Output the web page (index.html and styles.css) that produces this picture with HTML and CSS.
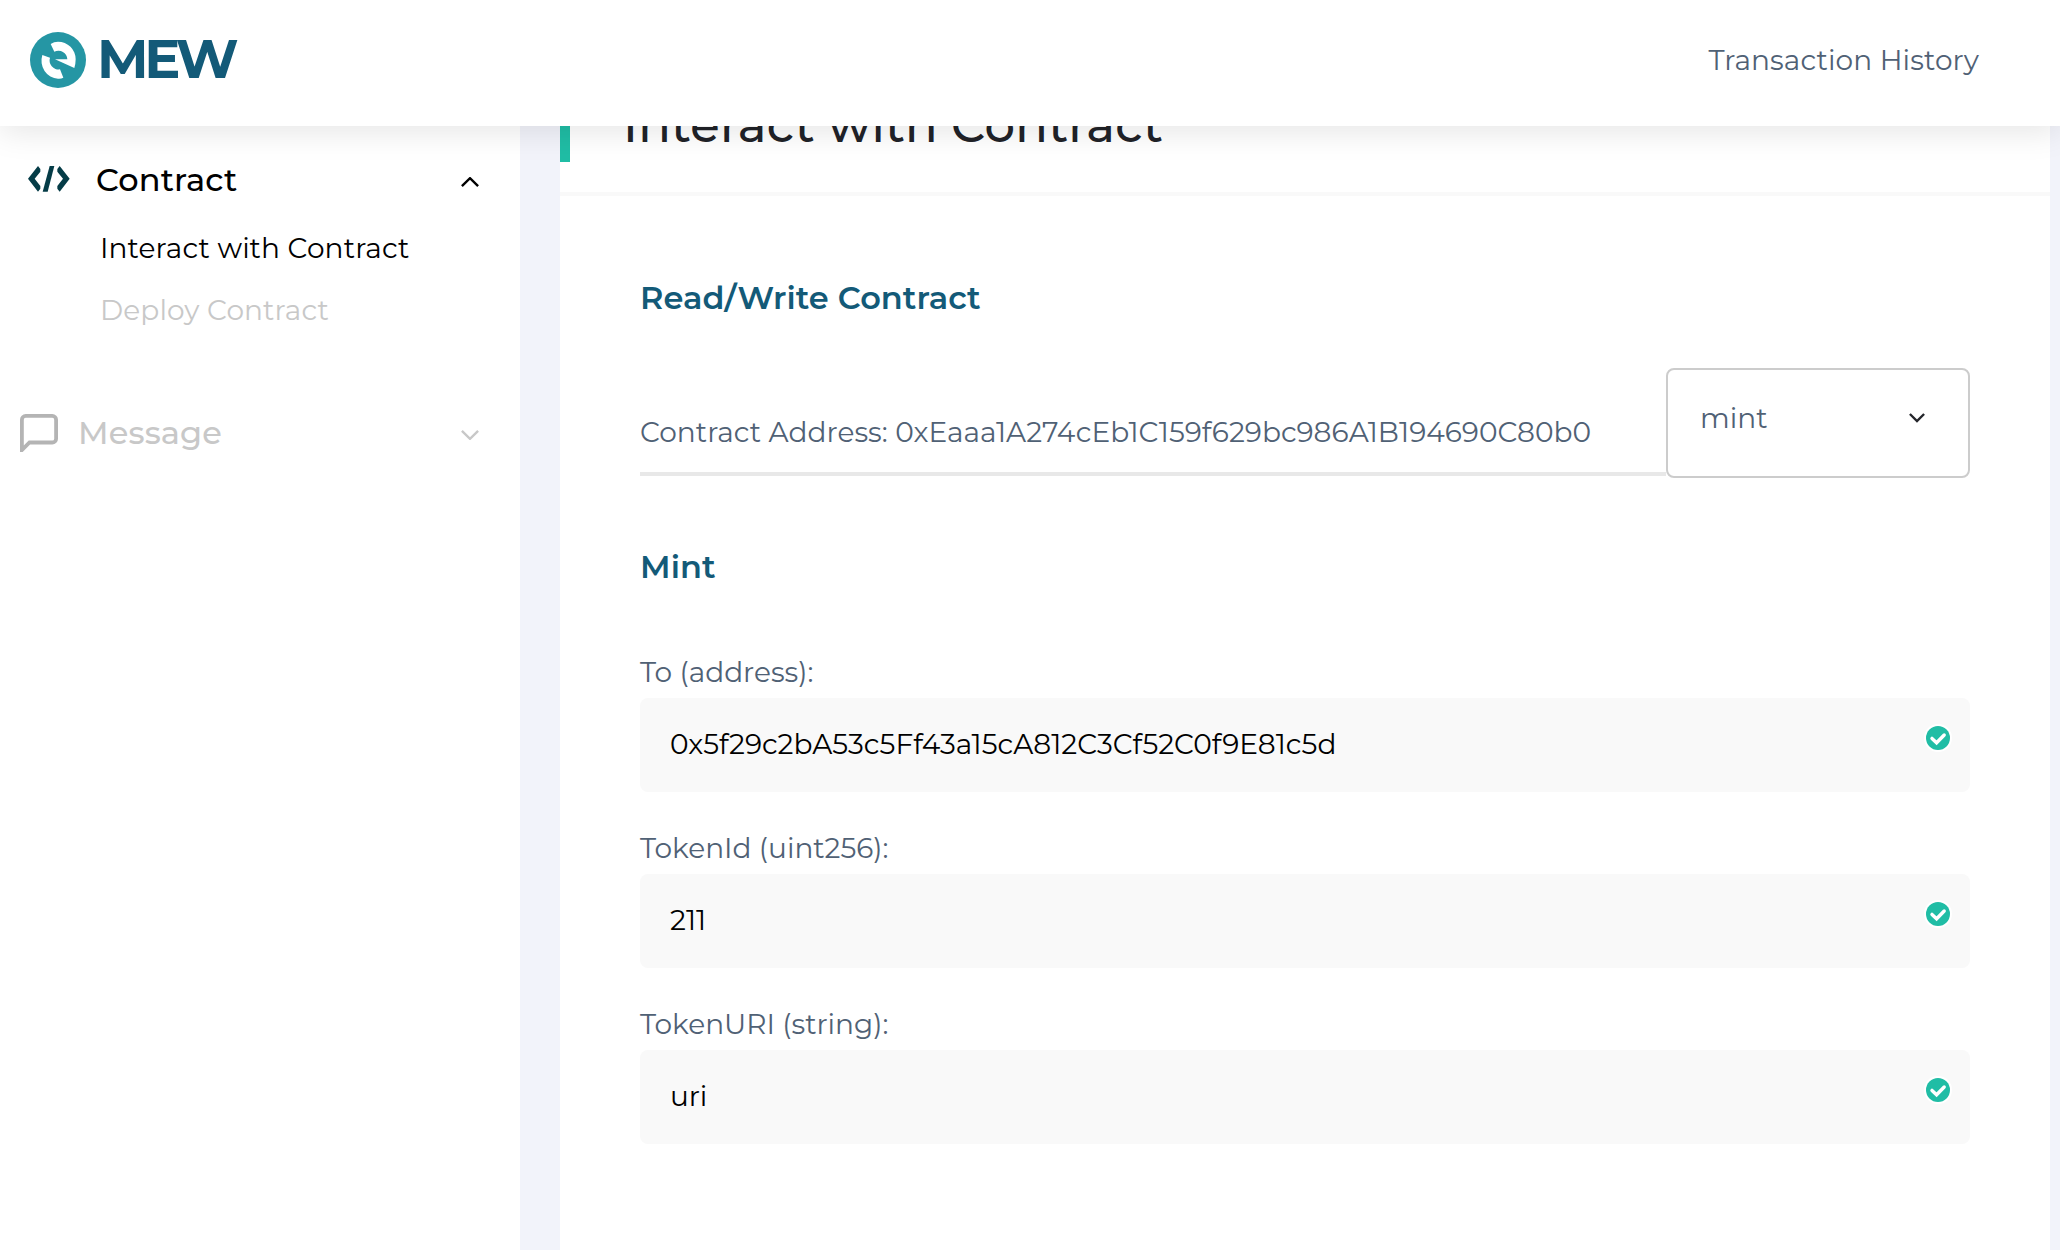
FILE: index.html
```html
<!DOCTYPE html>
<html lang="en">
<head>
<meta charset="utf-8">
<title>MEW - Interact with Contract</title>
<link rel="stylesheet" href="styles.css">
</head>
<body>
<header class="topbar">
  <a class="logo">
    <svg class="logo-mark" viewBox="0 0 168 168">
      <circle cx="84" cy="84" r="84" fill="#2596a4"/>
      <path fill="#fff" d="M62 36Q72 29 84 29A53 53 0 0 1 137 82Q137 95 133 108L75 82H112A27 27 0 0 0 73 59Z"/>
      <path fill="#fff" d="M37 69L60 77A27 27 0 0 0 90 112L100 137Q93 141 84 140A51 54 0 0 1 37 69Z"/>
    </svg>
    <span class="logo-text">MEW</span>
  </a>
  <a class="history">Transaction History</a>
</header>
<div class="layout">
  <nav class="sidebar">
    <div class="nav-head nav-contract">
      <svg class="icon-code" viewBox="0 0 126 78">
        <path d="M0 38L30 0 37 9V17L20 38 37 60V68L30 77Z"/>
        <path d="M65 0H79L59 77H44Z"/>
        <path d="M125 38L95 0 88 9V17L105 38 88 60V68L95 77Z"/>
      </svg>
      <span class="nav-title">Contract</span>
      <svg class="chevron" viewBox="0 0 18 10"><path d="M.9 9.1L9 1.2 17.1 9.1"/></svg>
    </div>
    <a class="nav-item active">Interact with Contract</a>
    <a class="nav-item">Deploy Contract</a>
    <div class="nav-head nav-message">
      <svg class="icon-message" viewBox="2 2 20 20"><path d="M21 15a2 2 0 0 1-2 2H7l-4 4V5a2 2 0 0 1 2-2h14a2 2 0 0 1 2 2z"/></svg>
      <span class="nav-title">Message</span>
      <svg class="chevron" viewBox="0 0 18 10"><path d="M.9 .9L9 8.8 17.1 .9"/></svg>
    </div>
  </nav>
  <main class="panel">
    <div class="panel-head"><h1>Interact with Contract</h1></div>
    <div class="panel-body">
      <h2>Read/Write Contract</h2>
      <div class="address-row">
        <div class="address">Contract Address: 0xEaaa1A274cEb1C159f629bc986A1B194690C80b0</div>
        <div class="select">
          <span>mint</span>
          <svg viewBox="0 0 16 10"><path d="M.9 1L8 8 15.1 1"/></svg>
        </div>
      </div>
      <h2 class="method">Mint</h2>
      <div class="fields">
        <div class="field">
          <label>To (address):</label>
          <div class="input"><span>0x5f29c2bA53c5Ff43a15cA812C3Cf52C0f9E81c5d</span>
            <svg class="check" viewBox="0 0 28 28"><circle cx="14" cy="14" r="14" fill="#fff"/><circle cx="14" cy="14" r="12" fill="#20bda5"/><path d="M8 14.4L12.6 18.8 20.2 11"/></svg></div>
        </div>
        <div class="field">
          <label>TokenId (uint256):</label>
          <div class="input"><span>211</span>
            <svg class="check" viewBox="0 0 28 28"><circle cx="14" cy="14" r="14" fill="#fff"/><circle cx="14" cy="14" r="12" fill="#20bda5"/><path d="M8 14.4L12.6 18.8 20.2 11"/></svg></div>
        </div>
        <div class="field">
          <label>TokenURI (string):</label>
          <div class="input"><span>uri</span>
            <svg class="check" viewBox="0 0 28 28"><circle cx="14" cy="14" r="14" fill="#fff"/><circle cx="14" cy="14" r="12" fill="#20bda5"/><path d="M8 14.4L12.6 18.8 20.2 11"/></svg></div>
        </div>
      </div>
    </div>
  </main>
</div>
</body>
</html>
```
FILE: styles.css
```css
* { box-sizing: border-box; }
svg { display: block; flex: none; }

body {
  margin: 0;
  height: 1250px;
  overflow: hidden;
  display: flex;
  flex-direction: column;
  background: #f2f3fa;
  color: #506175;
  font: 400 28px/36px Montserrat, Inter, sans-serif;
}

.topbar {
  position: relative;
  z-index: 2;
  flex: none;
  height: 126px;
  padding: 0 81px 6px 30px;
  display: flex;
  align-items: center;
  justify-content: space-between;
  background: #fff;
  box-shadow: 0 6px 30px rgba(0, 0, 0, .1);
}
.logo { display: flex; align-items: center; gap: 11px; }
.logo-mark { width: 56px; height: 56px; }
.logo-text { margin-top: -2px; font-size: 54px; font-weight: 700; line-height: 56px; letter-spacing: -4.3px; color: #135a78; }
.history { letter-spacing: .1px; }

.layout { flex: 1; min-height: 0; display: flex; gap: 40px; padding-right: 10px; }

.sidebar { width: 520px; flex: none; padding-top: 34px; background: #fff; color: #c8c8c8; }
.nav-head { display: flex; align-items: center; padding-right: 41px; height: 40px; font-size: 32px; font-weight: 500; line-height: 40px; letter-spacing: .15px; }
.nav-contract { padding-left: 28px; margin-bottom: 30px; color: #000; }
.nav-contract .nav-title { margin-left: 26px; }
.nav-message { padding-left: 20px; margin-top: 85px; }
.nav-message .nav-title { margin-left: 20px; }
.icon-code { width: 42px; height: 26px; margin-top: -2px; fill: #053c47; }
.icon-message { width: 38px; height: 38px; fill: none; stroke: #b4b4b4; stroke-width: 2; }
.chevron { width: 18px; height: 10px; margin: 4px 0 0 auto; fill: none; stroke: currentColor; stroke-width: 2.4; }
.nav-item { display: block; height: 36px; margin: 0 0 26px 100px; letter-spacing: .12px; }
.nav-item.active { color: #000; }

/* The panel is scrolled up so that its heading runs under the top bar. */
.panel { flex: 1; margin-top: -60px; background: #fff; }
.panel-head { padding: 22px 0 30px; border-bottom: 4px solid #f9f9f9; }
h1 {
  margin: 0;
  padding-left: 53px;
  border-left: 10px solid #20bda5;
  color: #202228;
  font-size: 48px;
  font-weight: 500;
  line-height: 74px;
  letter-spacing: .25px;
}
.panel-body { padding: 82px 80px 0; }
h2 { margin: 0; color: #135a78; font-size: 32px; font-weight: 600; line-height: 40px; letter-spacing: .08px; }
h2.method { margin-top: 69px; margin-bottom: 67px; }

.address-row { display: flex; align-items: flex-end; margin-top: 50px; }
.address { flex: 1; margin-bottom: 2px; padding-bottom: 22px; border-bottom: 4px solid #e8e8e8; white-space: nowrap; letter-spacing: .03px; }
.select {
  width: 304px;
  height: 110px;
  padding: 30px 43px 0 32px;
  display: flex;
  justify-content: space-between;
  border: 2px solid #ccc;
  border-radius: 8px;
}
.select svg { width: 16px; height: 10px; margin-top: 13px; fill: none; stroke: #24262b; stroke-width: 2.4; }

.fields { display: flex; flex-direction: column; gap: 38px; }
.field { display: flex; flex-direction: column; gap: 8px; }
.input {
  height: 94px;
  padding: 28px 18px 0 30px;
  display: flex;
  justify-content: space-between;
  background: #f9f9f9;
  border-radius: 8px;
  color: #000;
}
.check { width: 28px; height: 28px; margin-top: -2px; }
.check path { fill: none; stroke: #fff; stroke-width: 3.4; stroke-linecap: round; }
```
